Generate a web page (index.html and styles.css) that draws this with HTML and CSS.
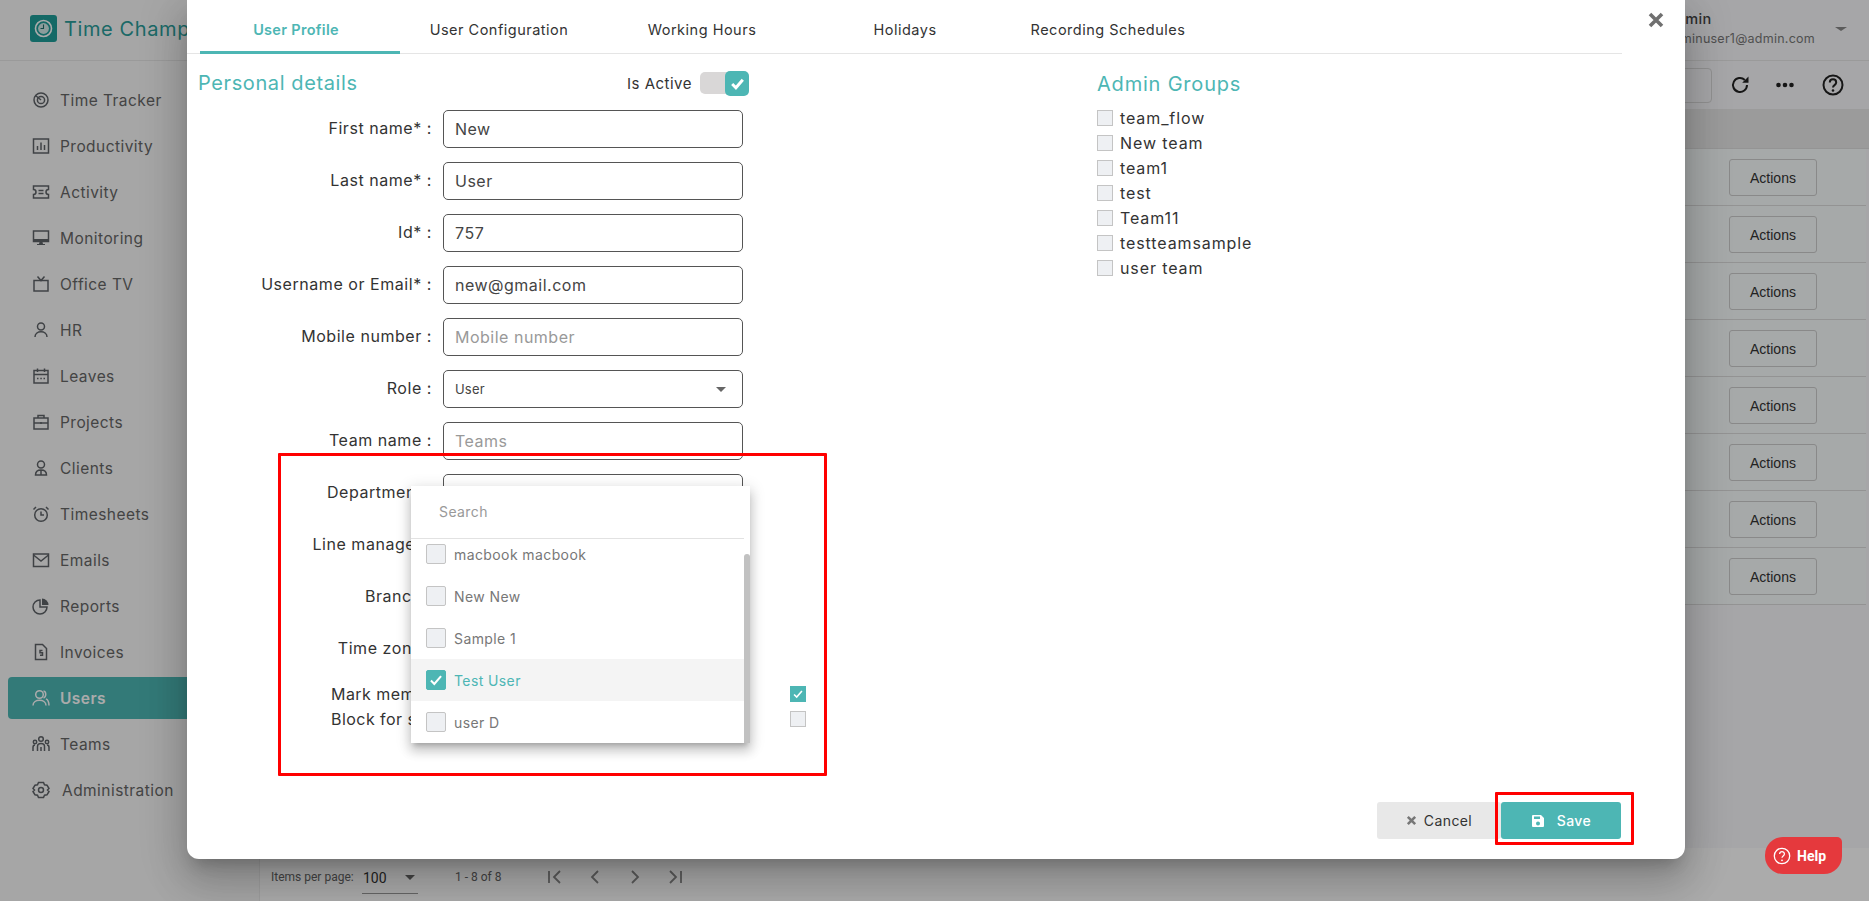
FILE: index.html
```html
<!DOCTYPE html>
<html lang="en">
<head>
<meta charset="utf-8">
<title>Users</title>
<link rel="stylesheet" href="styles.css">
</head>
<body>
<div class="app">
  <aside class="sidebar">
    <div class="brand">
      <svg class="brand-icon" viewBox="0 0 27 27"><rect width="27" height="27" rx="3" fill="#1f9d99"/><circle cx="13.5" cy="13.5" r="8" fill="none" stroke="#fff" stroke-width="1.6"/><circle cx="13.5" cy="13.5" r="5.4" fill="#cfe9e8"/><path d="M13.5 9.5v4h-3" fill="none" stroke="#1f6f6c" stroke-width="1.1"/></svg>
      <span class="brand-name">Time Champ</span>
    </div>
    <nav class="nav">
      <a class="nav-item"><svg viewBox="0 0 18 18"><circle cx="9" cy="9" r="7"/><circle cx="9" cy="9" r="3.6"/><path d="M3.5 4.5 9 9"/></svg><span>Time Tracker</span></a>
      <a class="nav-item"><svg viewBox="0 0 18 18"><rect x="1.5" y="2" width="15" height="14"/><path d="M5.5 13V9M9 13V5.5M12.5 13V8"/></svg><span>Productivity</span></a>
      <a class="nav-item"><svg viewBox="0 0 18 18"><path d="M1.5 3h15v3.5a2.5 2.5 0 0 0 0 5V15h-15v-3.5a2.500 2.500 0 0 0 0-5z"/><path d="M6.500 7.500h5M6.500 10.500h5"/></svg><span>Activity</span></a>
      <a class="nav-item"><svg viewBox="0 0 18 18"><rect x="1.500" y="2" width="15" height="10.500"/><path class="solid" d="M1.500 10h15v3h-15zM7.500 13h3l.5 2h2v1H5v-1h2z"/></svg><span>Monitoring</span></a>
      <a class="nav-item"><svg viewBox="0 0 18 18"><rect x="2" y="5.500" width="14" height="10.500"/><path d="M5.500 1.500 9 5.500l3.500-4"/></svg><span>Office TV</span></a>
      <a class="nav-item"><svg viewBox="0 0 18 18"><circle cx="9" cy="5.500" r="3.500"/><path d="M3 16c0-7 12-7 12 0"/></svg><span>HR</span></a>
      <a class="nav-item"><svg viewBox="0 0 18 18"><rect x="2" y="3.500" width="14" height="12.500"/><path d="M2 7.500h14M5.500 1.500v3.500M12.500 1.500v3.500M5 11.500h1.500M8.300 11.500h1.500M11.500 11.500H13"/></svg><span>Leaves</span></a>
      <a class="nav-item"><svg viewBox="0 0 18 18"><rect x="2" y="5" width="14" height="11"/><path d="M6 5V2.500h6V5M2 10h14M9 9v2"/></svg><span>Projects</span></a>
      <a class="nav-item"><svg viewBox="0 0 18 18"><circle cx="9" cy="5.500" r="3.500"/><path d="M3.500 16c0-3 2-5 5.500-5s5.500 2 5.500 5zM9 11v5"/></svg><span>Clients</span></a>
      <a class="nav-item"><svg viewBox="0 0 18 18"><circle cx="9" cy="10" r="6.300"/><path d="M9 6.500V10h3M1.500 4.500 4 2M16.500 4.500 14 2"/></svg><span>Timesheets</span></a>
      <a class="nav-item"><svg viewBox="0 0 18 18"><rect x="1.500" y="3" width="15" height="12.500"/><path d="m1.500 4 7.500 6 7.500-6"/></svg><span>Emails</span></a>
      <a class="nav-item"><svg viewBox="0 0 18 18"><path d="M8 3a7 7 0 1 0 7 7H8z"/><path class="solid" d="M10 1.500a6.500 6.500 0 0 1 6.500 6.500H10z"/></svg><span>Reports</span></a>
      <a class="nav-item"><svg viewBox="0 0 18 18"><path d="M3.500 1.500h7l4 4v11h-11z"/><path d="M10.500 7.500H8v2.300h2.500v2.400H8"/></svg><span>Invoices</span></a>
      <a class="nav-item active"><svg viewBox="0 0 18 18"><circle cx="7.500" cy="5.500" r="3.800"/><path d="M1 16.500c0-7 13-7 13 0M11.500 2c3 .5 3 6 0 7M14 9.800c2 1 3 3.500 3 6.700"/></svg><span>Users</span></a>
      <a class="nav-item"><svg viewBox="0 0 18 18"><circle cx="9" cy="4" r="2.300"/><circle cx="3" cy="7" r="1.700"/><circle cx="15" cy="7" r="1.700"/><path d="M5.500 16v-4.500c0-4 7-4 7 0V16M9 12v4M1 16v-3.500c0-1.500 1-2.500 2-2.500M17 16v-3.500c0-1.500-1-2.500-2-2.500"/></svg><span>Teams</span></a>
      <a class="nav-item admin"><svg viewBox="0 0 18 18"><path d="M6.500 1.500h5l1 2.300 2.500.4 2 3.300-1.500 1.500 1.500 1.500-2 3.300-2.500.4-1 2.300h-5l-1-2.300-2.500-.4-2-3.300L2.500 9 1 7.500l2-3.300 2.500-.4z"/><circle cx="9" cy="9" r="2.500"/></svg><span>Administration</span></a>
    </nav>
  </aside>
  <main class="main">
    <header class="topbar">
      <div class="account">
        <div class="account-name">Admin</div>
        <div class="account-mail">adminuser1@admin.com</div>
      </div>
      <span class="caret"></span>
    </header>
    <div class="toolbar">
      <div class="searchbox"></div>
      <svg class="tool refresh" viewBox="0 0 24 24"><path d="M19 12a7 7 0 1 1-2.200-5.100"/><path class="solid" d="M20.500 3.500v6.300h-6.300z"/></svg>
      <svg class="tool" viewBox="0 0 24 24"><circle class="solid" cx="5.500" cy="12" r="2.300"/><circle class="solid" cx="12" cy="12" r="2.300"/><circle class="solid" cx="18.500" cy="12" r="2.300"/></svg>
      <svg class="tool" viewBox="0 0 24 24"><circle cx="12" cy="12" r="9.500"/><path d="M8.800 9.500c0-4.200 6.400-4.200 6.400 0 0 2.600-3.200 2.600-3.200 5"/><circle class="solid" cx="12" cy="17.500" r="1.300"/></svg>
    </div>
    <div class="table-head"></div>
    <div class="table-row"><button class="btn-actions">Actions</button></div>
    <div class="table-row"><button class="btn-actions">Actions</button></div>
    <div class="table-row"><button class="btn-actions">Actions</button></div>
    <div class="table-row"><button class="btn-actions">Actions</button></div>
    <div class="table-row"><button class="btn-actions">Actions</button></div>
    <div class="table-row"><button class="btn-actions">Actions</button></div>
    <div class="table-row"><button class="btn-actions">Actions</button></div>
    <div class="table-row"><button class="btn-actions">Actions</button></div>
    <div class="spacer"></div>
    <footer class="pager">
      <span class="pager-label">Items per page:</span>
      <span class="pager-size">100<span class="caret"></span></span>
      <span class="pager-range">1 - 8 of 8</span>
      <svg class="pager-icon" viewBox="0 0 18 18"><path d="M3 3v12M14 3 8 9l6 6"/></svg>
      <svg class="pager-icon" viewBox="0 0 18 18"><path d="M12 3 6 9l6 6"/></svg>
      <svg class="pager-icon" viewBox="0 0 18 18"><path d="m6 3 6 6-6 6"/></svg>
      <svg class="pager-icon" viewBox="0 0 18 18"><path d="M15 3v12M4 3l6 6-6 6"/></svg>
    </footer>
  </main>
</div>

<div class="backdrop"></div>

<section class="modal">
  <svg class="close" viewBox="0 0 16 16"><path d="m2 2 12 12M14 2 2 14"/></svg>
  <div class="tabs">
    <div class="tab active">User Profile</div>
    <div class="tab">User Configuration</div>
    <div class="tab">Working Hours</div>
    <div class="tab">Holidays</div>
    <div class="tab">Recording Schedules</div>
  </div>
  <div class="modal-body">
    <div class="col-left">
      <div class="section-head">
        <h2 class="section-title">Personal details</h2>
        <div class="is-active">
          <span>Is Active</span>
          <span class="toggle"><span class="knob"><svg viewBox="0 0 16 16"><path d="m3 8.500 3.500 3.500L13 4.500"/></svg></span></span>
        </div>
      </div>
      <div class="form-row"><label class="form-label">First name* :</label><div class="field">New</div></div>
      <div class="form-row"><label class="form-label">Last name* :</label><div class="field">User</div></div>
      <div class="form-row"><label class="form-label">Id* :</label><div class="field">757</div></div>
      <div class="form-row"><label class="form-label">Username or Email* :</label><div class="field">new@gmail.com</div></div>
      <div class="form-row"><label class="form-label">Mobile number :</label><div class="field placeholder">Mobile number</div></div>
      <div class="form-row"><label class="form-label">Role :</label><div class="field select">User<span class="caret"></span></div></div>
      <div class="form-row"><label class="form-label">Team name :</label><div class="field placeholder">Teams</div></div>
      <div class="form-row"><label class="form-label">Department :</label><div class="field"></div></div>
      <div class="form-row"><label class="form-label">Line manager :</label><div class="field"></div></div>
      <div class="form-row"><label class="form-label">Branch :</label><div class="field"></div></div>
      <div class="form-row"><label class="form-label">Time zone :</label><div class="field"></div></div>
      <div class="check-row"><span>Mark member</span><span class="box checked"><svg viewBox="0 0 16 16"><path d="m3.500 8.500 3 3 6-7"/></svg></span></div>
      <div class="check-row"><span>Block for sync</span><span class="box"></span></div>
    </div>
    <div class="col-right">
      <h2 class="section-title">Admin Groups</h2>
      <ul class="groups">
        <li><span class="box"></span>team_flow</li>
        <li><span class="box"></span>New team</li>
        <li><span class="box"></span>team1</li>
        <li><span class="box"></span>test</li>
        <li><span class="box"></span>Team11</li>
        <li><span class="box"></span>testteamsample</li>
        <li><span class="box"></span>user team</li>
      </ul>
    </div>
  </div>
  <div class="modal-actions">
    <button class="btn cancel"><svg viewBox="0 0 12 12"><path d="m2 2 8 8M10 2l-8 8"/></svg>Cancel</button>
    <button class="btn save"><svg viewBox="0 0 14 14"><path d="M1 2a1 1 0 0 1 1-1h8l3 3v8a1 1 0 0 1-1 1H2a1 1 0 0 1-1-1zM3 2.500V5h6V2.500zM7 7.500a2 2 0 1 0 0 4 2 2 0 0 0 0-4z" fill-rule="evenodd"/></svg>Save</button>
  </div>
  <div class="dropdown">
    <div class="dd-search">Search</div>
    <div class="dd-list">
      <div class="dd-items">
        <div class="dd-item"><span class="box large"></span>macbook macbook</div>
        <div class="dd-item"><span class="box large"></span>New New</div>
        <div class="dd-item"><span class="box large"></span>Sample 1</div>
        <div class="dd-item selected"><span class="box large checked"><svg viewBox="0 0 16 16"><path d="m3.500 8.500 3 3 6-7"/></svg></span>Test User</div>
        <div class="dd-item"><span class="box large"></span>user D</div>
      </div>
      <div class="dd-scroll"><div class="dd-thumb"></div></div>
    </div>
  </div>
</section>

<div class="mark mark-form"></div>
<div class="mark mark-save"></div>

<button class="help"><svg viewBox="0 0 18 18"><circle cx="9" cy="9" r="7.700"/><path d="M6.600 7c0-3.200 4.800-3.200 4.800 0 0 2-2.400 2-2.400 3.800"/><circle class="solid" cx="9" cy="13.300" r=".9"/></svg>Help</button>
</body>
</html>
```
FILE: styles.css
```css
* { box-sizing: border-box; }
html, body { margin: 0; height: 901px; overflow: hidden; }
body { position: relative; font-family: "Inter", "Liberation Sans", sans-serif; color: #333; background: #fff; }

.app { display: flex; height: 901px; }

/* Sidebar */
.sidebar { width: 260px; flex: none; background: #f8f8f8; border-right: 1px solid #ececec; }
.brand { height: 61px; padding: 0 0 1px 30px; display: flex; align-items: center; gap: 7px; border-bottom: 1px solid #e6e6e6; white-space: nowrap; overflow: hidden; }
.brand-icon { width: 27px; height: 27px; flex: none; margin-top: -2px; }
.brand-name { font-size: 20px; color: #2a9d9a; letter-spacing: .6px; margin-top: -2px; }
.nav { padding-top: 18px; }
.nav-item { margin: 0 0 4px 8px; height: 42px; padding-left: 24px; display: flex; align-items: center; gap: 10px; font-size: 15.500px; letter-spacing: .45px; color: #666; border-radius: 4px 0 0 4px; }
.nav-item svg { width: 18px; height: 18px; flex: none; fill: none; stroke: #5f6368; stroke-width: 1.500; }
.nav-item .solid { fill: #5f6368; stroke: none; }
.nav-item.active { background: #4db6b4; color: #fff; font-weight: 600; }
.nav-item.active svg { stroke: #fff; }
.nav-item.admin { gap: 12px; }

/* Main page behind the dialog */
.main { flex: 1; display: flex; flex-direction: column; min-width: 0; background: #f8f8fb; }
.topbar { height: 61px; flex: none; border-bottom: 1px solid #e6e6e6; display: flex; justify-content: flex-end; align-items: center; padding: 0 22px 3px 0; }
.account { text-align: right; white-space: nowrap; }
.account-name { font-size: 14.500px; font-weight: 500; letter-spacing: .3px; color: #444; text-align: left; line-height: 20px; }
.account-mail { font-size: 12.500px; letter-spacing: .25px; color: #777; line-height: 19px; }
.caret { display: inline-block; width: 0; height: 0; border: 5px solid transparent; border-top-color: #666; border-bottom: 0; }
.topbar .caret { margin-left: 20px; border-width: 4px 6px 0; border-top-color: #888; }
.toolbar { height: 48px; flex: none; display: flex; align-items: center; justify-content: flex-end; padding: 0 24px 0 0; }
.searchbox { width: 260px; height: 35px; border: 1px solid #d8d8d8; border-radius: 4px; margin-right: 16px; }
.tool { width: 24px; height: 24px; margin-left: 21px; fill: none; stroke: #222; stroke-width: 2; }
.tool.refresh { margin-left: 0; }
.tool + .tool + .tool { margin-left: 24px; }
.tool .solid { fill: #222; stroke: none; }
.table-head { height: 40px; flex: none; background: #e7e7e7; border-bottom: 1px solid #ddd; }
.table-row { height: 57px; flex: none; display: flex; align-items: center; justify-content: flex-end; margin-right: 3px; padding: 1px 49px 0 0; background: #f8fcfc; border-bottom: 1px solid #dcdcdc; }
.btn-actions { width: 88px; height: 37px; background: transparent; border: 1px solid #ccc; border-radius: 3px; font: 14px "Liberation Sans", sans-serif; color: #333; padding: 0; }
.spacer { flex: 1; }
.pager { height: 53px; flex: none; display: flex; align-items: center; padding: 5px 0 0 11px; background: #fff; font-family: "Roboto", sans-serif; color: #666; }
.pager-label { font-size: 12px; width: 91px; }
.pager-size { font-size: 14px; width: 56px; height: 29px; margin: 5px 37px 0 0; padding: 0 3px 3px 1px; display: flex; align-items: center; justify-content: space-between; color: #333; border-bottom: 1.500px solid #999; }
.pager-range { font-size: 12px; width: 91px; }
.pager-icon { width: 18px; height: 18px; margin-right: 22px; fill: none; stroke: #888; stroke-width: 1.800; }

.backdrop { position: absolute; inset: 0; background: rgba(0, 0, 0, .33); }

/* Dialog */
.modal { position: absolute; left: 187px; top: 0; width: 1498px; height: 859px; background: #fff; border-radius: 0 0 12px 12px; box-shadow: 0 11px 15px -7px rgba(0,0,0,.2), 0 24px 38px 3px rgba(0,0,0,.14), 0 9px 46px 8px rgba(0,0,0,.12); display: flex; flex-direction: column; }
.close { position: absolute; right: 21px; top: 12px; width: 16px; height: 16px; fill: none; stroke: #707070; stroke-width: 3.600; }
.tabs { height: 54px; flex: none; width: 1435px; padding-left: 13px; display: flex; border-bottom: 1px solid #e5e5e5; }
.tab { width: 200px; height: 54px; margin-right: 3px; padding: 21px 8px 0 0; text-align: center; font-size: 14.500px; letter-spacing: .5px; line-height: 18px; color: #333; white-space: nowrap; }
.tab.active { color: #4db6b4; font-weight: 600; letter-spacing: .3px; border-bottom: 3px solid #4db6b4; }
.modal-body { flex: 1; display: flex; padding-left: 11px; }
.col-left { width: 899px; }
.section-head { height: 56px; width: 551px; padding-top: 2px; display: flex; align-items: center; justify-content: space-between; }
.section-title { margin: 0; font-size: 20px; letter-spacing: .6px; line-height: 28px; font-weight: 400; color: #4db6b4; }
.is-active { display: flex; align-items: center; gap: 8px; font-size: 15px; letter-spacing: .5px; color: #333; }
.toggle { width: 49px; height: 22px; border-radius: 5px; background: #d9d7d7; display: flex; justify-content: flex-end; align-items: center; }
.knob { width: 24px; height: 25px; border-radius: 5px; background: #4db6b4; display: flex; align-items: center; justify-content: center; }
.knob svg { width: 17px; height: 17px; fill: none; stroke: #fff; stroke-width: 2.800; }
.form-row { display: flex; align-items: center; height: 38px; margin-bottom: 14px; }
.form-label { width: 234px; padding-bottom: 2px; text-align: right; font-size: 16px; letter-spacing: .55px; color: #333; margin-right: 11px; flex: none; white-space: nowrap; }
.field { width: 300px; height: 38px; border: 1px solid #555; border-radius: 5px; padding: 0 11px; display: flex; align-items: center; font-size: 16px; letter-spacing: .5px; color: #444; }
.field.placeholder { color: #999; }
.field.select { font-size: 13px; letter-spacing: .2px; justify-content: space-between; padding-right: 16px; }
.check-row { width: 608px; padding-left: 133px; display: flex; justify-content: space-between; align-items: center; height: 25px; font-size: 16px; letter-spacing: .45px; color: #333; }
.form-row + .check-row { margin-top: -1px; }
.box { width: 16px; height: 16px; flex: none; background: #eef0f3; border: 1px solid #c4c4c4; display: inline-flex; align-items: center; justify-content: center; }
.box.large { width: 20px; height: 20px; border-radius: 2px; }
.box.checked { background: #4db6b4; border-color: #4db6b4; }
.box svg { width: 100%; height: 100%; fill: none; stroke: #fff; stroke-width: 1.800; }
.col-right .section-title { margin-top: 16px; letter-spacing: .8px; }
.groups { list-style: none; margin: 7px 0 0; padding: 0; }
.groups li { height: 25px; display: flex; align-items: center; gap: 7px; font-size: 16px; letter-spacing: .9px; color: #333; }

/* Footer buttons */
.modal-actions { position: absolute; right: 64px; bottom: 20px; display: flex; }
.btn { height: 37px; border: 0; border-radius: 3px; display: flex; align-items: center; justify-content: center; font-family: inherit; font-size: 14px; letter-spacing: .4px; }
.btn.cancel { width: 124px; background: #e8e8e8; color: #333; gap: 7px; }
.btn.cancel svg { width: 11px; height: 11px; fill: none; stroke: #777; stroke-width: 2.800; }
.btn.save { width: 120px; background: #4db6b4; color: #fff; font-weight: 500; gap: 12px; }
.btn.save svg { width: 14px; height: 14px; fill: #fff; }

/* Dropdown panel */
.dropdown { position: absolute; left: 224px; top: 486px; width: 339px; height: 257px; background: #fff; box-shadow: 0 5px 5px -3px rgba(0,0,0,.2), 0 8px 10px 1px rgba(0,0,0,.14), 0 3px 14px 2px rgba(0,0,0,.12); display: flex; flex-direction: column; overflow: hidden; }
.dd-search { height: 53px; flex: none; width: 333px; padding: 0 0 2px 28px; display: flex; align-items: center; font-size: 14px; letter-spacing: .4px; color: #999; border-bottom: 1px solid #e2e2e2; }
.dd-list { flex: 1; display: flex; min-height: 0; }
.dd-items { flex: 1; }
.dd-item { height: 42px; display: flex; align-items: center; gap: 8px; padding-left: 15px; font-size: 14px; letter-spacing: .4px; color: #777; }
.dd-items .dd-item:first-child { margin-top: -6px; }
.dd-item.selected { background: #f4f4f4; color: #4db6b4; }
.dd-scroll { width: 6px; padding-top: 15px; }
.dd-thumb { height: 100%; background: #c1c1c1; border-radius: 3px 3px 0 0; }

/* Red annotation frames */
.mark { position: absolute; border: 3px solid #f00; border-radius: 1px; }
.mark-form { left: 278px; top: 453px; width: 549px; height: 323px; }
.mark-save { left: 1495px; top: 792px; width: 139px; height: 53px; }

.help { position: absolute; left: 1765px; top: 837px; width: 77px; height: 37px; background: #e5393d; color: #fff; border: 0; border-radius: 18px 5px 18px 18px; display: flex; align-items: center; gap: 6px; padding: 0 0 0 8px; font: 700 14px "Roboto", sans-serif; }
.help svg { width: 18px; height: 18px; flex: none; fill: none; stroke: #fff; stroke-width: 1.300; }
.help .solid { fill: #fff; stroke: none; }
```
